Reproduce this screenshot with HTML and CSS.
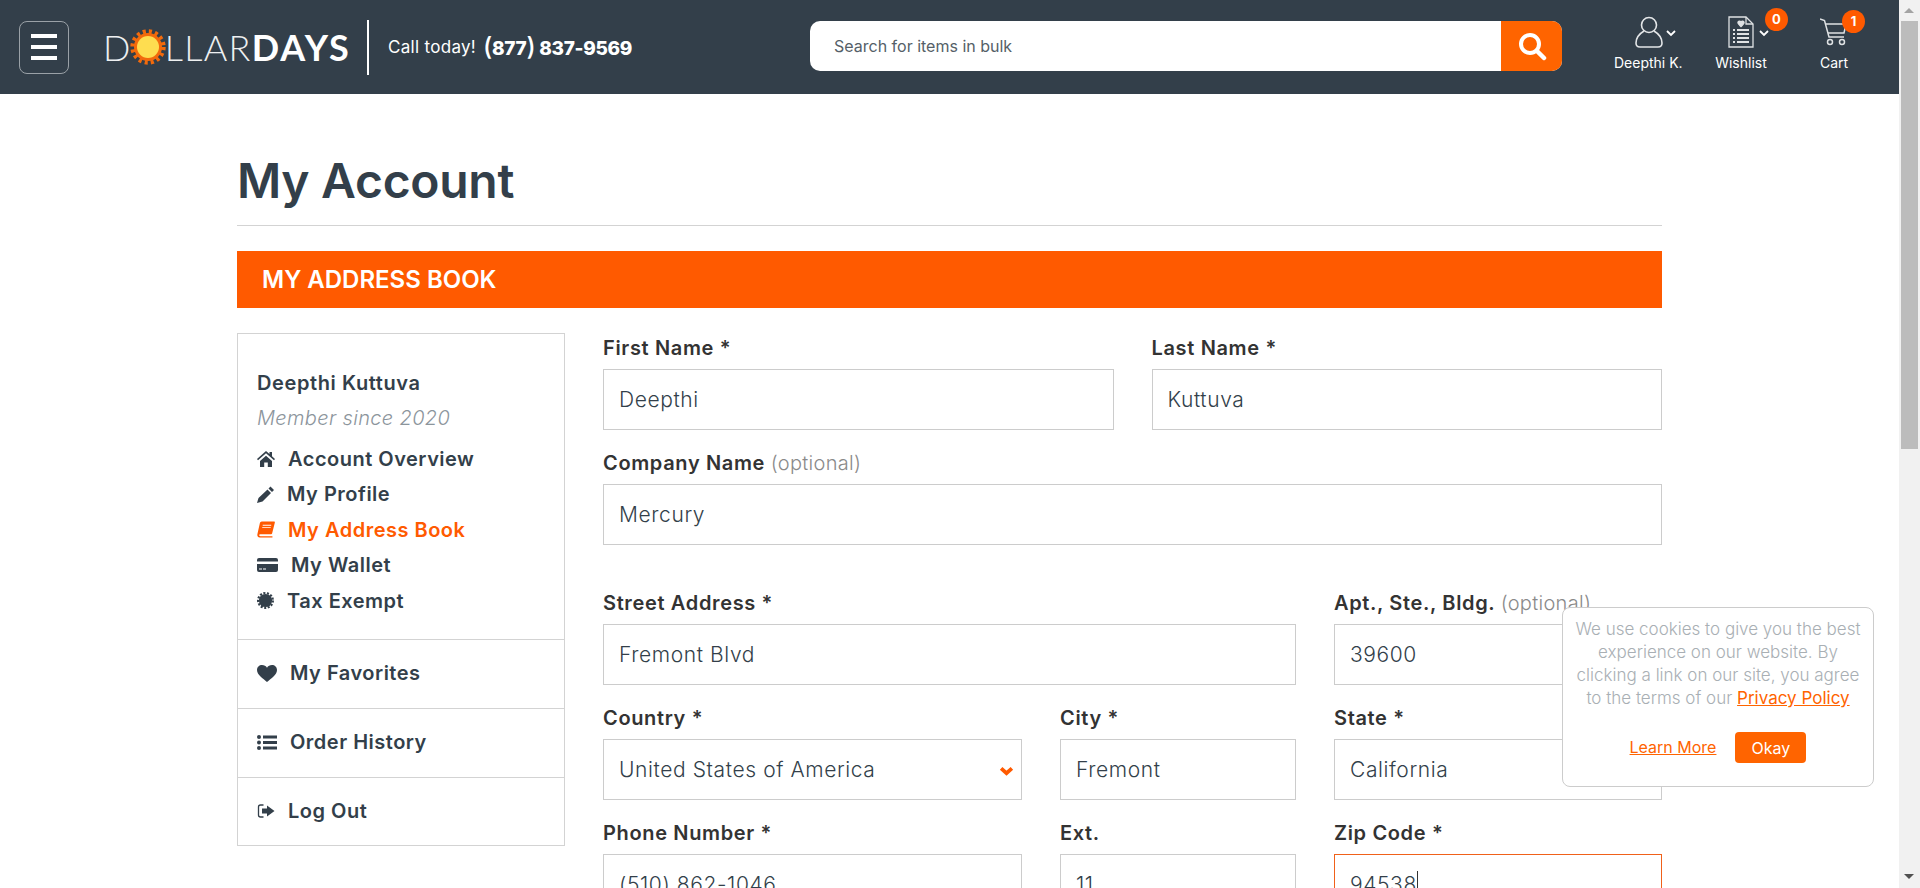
FILE: index.html
```html
<!DOCTYPE html>
<html lang="en">
<head>
    <meta charset="UTF-8">
    <meta name="viewport" content="width=device-width, initial-scale=1.0">
    <title>My Account</title>
    <link rel="stylesheet" href="styles.css">
</head>
<body>

<div class="app">
    <div class="page">
        <header class="topbar">
            <div class="menu-btn"><span></span><span></span><span></span></div>
            <div class="logo">
                <span>D</span>
                <svg class="sun" viewBox="0 0 36 36" width="36" height="36">
                    <circle cx="18" cy="18" r="15.2" fill="none" stroke="#f26a0c" stroke-width="5" stroke-dasharray="3 3"></circle>
                    <circle cx="18" cy="18" r="14" fill="#f26a0c"></circle>
                    <circle cx="18" cy="18" r="11" fill="#fedd50"></circle>
                </svg>
                <span>LLAR</span><strong>DAYS</strong>
            </div>
            <div class="call">
                <span class="call-text">Call today!</span>
                <span class="call-num"><span class="paren">(</span>877<span class="paren">)</span> 837-9569</span>
            </div>
            <div class="search">
                <div class="search-text">Search for items in bulk</div>
                <div class="search-btn">
                    <svg viewBox="0 0 30 30" width="30" height="30">
                        <circle cx="13" cy="13" r="9" fill="none" stroke="#fff" stroke-width="4"></circle>
                        <path d="M20 20l7 7" stroke="#fff" stroke-width="4.5" stroke-linecap="round"></path>
                    </svg>
                </div>
            </div>
            <div class="tool tool-user">
                <svg viewBox="0 0 28 32" width="28" height="32" fill="none" stroke="#e4e6e8" stroke-width="1.6">
                    <circle cx="14" cy="9" r="7.5"></circle>
                    <path d="M9 15C4 18 1 22 1 27c0 3 1.5 4 4 4h18c2.500 0 4-1 4-4 0-5-3-9-8-12"></path>
                </svg>
                <svg class="chev" viewBox="0 0 10 7" width="10" height="7"><path d="M1 1l4 4 4-4" fill="none" stroke="#fff" stroke-width="1.800"></path></svg>
                <div class="tool-label">Deepthi K.</div>
            </div>
            <div class="tool tool-wish">
                <svg viewBox="0 0 26 32" width="26" height="32" fill="none" stroke="#dfe2e4" stroke-width="1.3">
                    <path d="M1 1h17l7 7v23H1z"></path>
                    <path d="M18 1v7h7"></path>
                    <path d="M10 6c1-1.500 3-1 3 .5 0-1.500 2-2 3-.5 .6 1.500-1.500 3-3 4.500C11.500 9 9.400 7.500 10 6z" fill="#dfe2e4"></path>
                    <path d="M5 14h2M9 14h12M5 18h2M9 18h12M5 22h2M9 22h12M5 26h2M9 26h12" stroke-width="1.800"></path>
                </svg>
                <svg class="chev" viewBox="0 0 10 7" width="10" height="7"><path d="M1 1l4 4 4-4" fill="none" stroke="#fff" stroke-width="1.800"></path></svg>
                <span class="badge">0</span>
                <div class="tool-label">Wishlist</div>
            </div>
            <div class="tool tool-cart">
                <svg viewBox="0 0 28 28" width="28" height="28" fill="none" stroke="#dfe2e4" stroke-width="1.500">
                    <path d="M0 1l4.500 1.500L9 19h15"></path>
                    <path d="M5.500 6H26l-2 9H8"></path>
                    <circle cx="10" cy="24" r="2.500"></circle>
                    <circle cx="22" cy="24" r="2.500"></circle>
                </svg>
                <span class="badge">1</span>
                <div class="tool-label">Cart</div>
            </div>
        </header>

        <main class="content">
            <h1>My Account</h1>
            <div class="title-bar">MY ADDRESS BOOK</div>

            <div class="columns">
                <aside class="sidebar">
                    <div class="side-top">
                        <div class="side-name">Deepthi Kuttuva</div>
                        <div class="side-since">Member since 2020</div>
                        <a class="side-link">
                            <svg viewBox="0 0 18 16" width="18" height="16"><path d="M9 0L0 8l1 1.200 8-7 8 7L18 8l-3-2.700V1h-2.500v2z"></path><path d="M3 10l6-5.200 6 5.200v6h-4.200v-4.500H7.200V16H3z"></path></svg>
                            Account Overview
                        </a>
                        <a class="side-link">
                            <svg viewBox="0 0 17 17" width="17" height="17"><path d="M13.500.5L17 4l-2 2-3.500-3.500zM10.500 3.500L14 7l-8.500 8.500L0 17l1.500-5z"></path></svg>
                            My Profile
                        </a>
                        <a class="side-link active">
                            <svg viewBox="0 0 19 17" width="18" height="17"><path d="M5 0h13c.8 0 1 .6.8 1.400L16 12.500c-.2.800-.7 1-1.500 1H3.500c-1.800 0-1.500 2 0 2H16l.6.800-.6.700H3C1 17 0 15.500.4 13.500L3 2C3.300.8 4 0 5 0zM6 3.500v1h9v-1zM5.500 6v1h9V6z" fill-rule="evenodd"></path></svg>
                            My Address Book
                        </a>
                        <a class="side-link">
                            <svg viewBox="0 0 21 14" width="21" height="14"><path d="M2 0h17a2 2 0 0 1 2 2v1.500H0V2a2 2 0 0 1 2-2zM0 6h21v6a2 2 0 0 1-2 2H2a2 2 0 0 1-2-2zM2 10.500v1h3v-1zM6 10.500v1h3v-1z" fill-rule="evenodd"></path></svg>
                            My Wallet
                        </a>
                        <a class="side-link">
                            <svg viewBox="0 0 18 18" width="17" height="17"><circle cx="9" cy="9" r="7"></circle><circle cx="9" cy="9" r="7.800" fill="none" stroke="#333f4a" stroke-width="2.400" stroke-dasharray="2.200 1.600"></circle></svg>
                            Tax Exempt
                        </a>
                    </div>
                    <a class="side-row">
                        <svg viewBox="0 0 20 17" width="20" height="17"><path d="M10 17C6 13.500 0 10 0 5 0 2 2.300 0 5 0c2.200 0 4 1 5 2.700C11 1 12.800 0 15 0c2.700 0 5 2 5 5 0 5-6 8.500-10 12z"></path></svg>
                        My Favorites
                    </a>
                    <a class="side-row">
                        <svg viewBox="0 0 20 15" width="20" height="15"><circle cx="2" cy="2" r="2"></circle><circle cx="2" cy="7.500" r="2"></circle><circle cx="2" cy="13" r="2"></circle><path d="M6 .5h14v3H6zM6 6h14v3H6zM6 11.500h14v3H6z"></path></svg>
                        Order History
                    </a>
                    <a class="side-row">
                        <svg viewBox="0 0 17 14" width="18" height="14"><path d="M6 1H3a2 2 0 0 0-2 2v8a2 2 0 0 0 2 2h3" fill="none" stroke="#333f4a" stroke-width="1.300"></path><path d="M4.500 4.500h5V1.500L17 7l-7.500 5.500v-3h-5z"></path></svg>
                        Log Out
                    </a>
                </aside>

                <form class="address-form">
                    <div class="row">
                        <div class="field half"><label>First Name *</label><div class="input">Deepthi</div></div>
                        <div class="field half"><label>Last Name *</label><div class="input">Kuttuva</div></div>
                    </div>
                    <div class="row row-gap">
                        <div class="field half"><label>Company Name <em>(optional)</em></label><div class="input">Mercury</div></div>
                    </div>
                    <div class="row">
                        <div class="field street"><label>Street Address *</label><div class="input">Fremont Blvd</div></div>
                        <div class="field half"><label>Apt., Ste., Bldg. <em>(optional)</em></label><div class="input">39600</div></div>
                    </div>
                    <div class="row">
                        <div class="field country">
                            <label>Country *</label>
                            <div class="input select">
                                United States of America
                                <svg viewBox="0 0 14 9" width="15" height="10"><path d="M2 2l5 4.500L12 2" fill="none" stroke="#ff5a00" stroke-width="3.500"></path></svg>
                            </div>
                        </div>
                        <div class="field city"><label>City *</label><div class="input">Fremont</div></div>
                        <div class="field half"><label>State *</label><div class="input">California</div></div>
                    </div>
                    <div class="row">
                        <div class="field country"><label>Phone Number *</label><div class="input">(510) 862-1046</div></div>
                        <div class="field city"><label>Ext.</label><div class="input">11</div></div>
                        <div class="field half"><label>Zip Code *</label><div class="input focused">94538<span class="caret"></span></div></div>
                    </div>
                </form>
            </div>
        </main>

        <div class="cookie">
            <p>We use cookies to give you the best experience on our website. By clicking a link on our site, you agree to the terms of our <a>Privacy Policy</a></p>
            <div class="cookie-actions">
                <a>Learn More</a>
                <button type="button">Okay</button>
            </div>
        </div>
    </div>

    <div class="scrollbar">
        <div class="arrow-up"></div>
        <div class="thumb"></div>
        <div class="arrow-down"></div>
    </div>
</div>

</body>
</html>
```

FILE: styles.css
```css
* {
    box-sizing: border-box;
}
body {
    margin: 0;
    font-family: Inter, "Open Sans", sans-serif;
    color: #333f4a;
    background: #fff;
}
.app {
    display: flex;
    height: 888px;
    overflow: hidden;
}
.page {
    flex: 1;
    min-width: 0;
    position: relative;
}

/* header */
.topbar {
    display: flex;
    align-items: center;
    height: 94px;
    background: #333f4a;
    color: #fff;
}
.menu-btn {
    display: flex;
    flex-direction: column;
    justify-content: center;
    gap: 6.500px;
    width: 50px;
    height: 53px;
    margin-left: 19px;
    padding: 0 11px;
    border: 1px solid #9aa1a7;
    border-radius: 8px;
}
.menu-btn span {
    height: 4.500px;
    background: #fff;
}
.logo {
    display: flex;
    align-items: center;
    width: 266px;
    height: 55px;
    margin-left: 34px;
    border-right: 2px solid #fff;
    font-family: Lato, sans-serif;
    font-size: 36px;
    font-weight: 300;
    letter-spacing: 1.300px;
    color: #eef0f1;
}
.logo strong {
    font-weight: 700;
    color: #fff;
    letter-spacing: 2px;
}
.sun {
    margin: 0 -1px 0 -2px;
}
.call {
    display: flex;
    align-items: center;
    width: 422px;
    margin-left: 19px;
}
.call-text {
    font-size: 17px;
    letter-spacing: .3px;
    margin-right: 7px;
}
.call-num {
    font-size: 19px;
    font-weight: 800;
    letter-spacing: -.3px;
}
.paren {
    font-size: 25px;
    font-weight: 500;
    line-height: 1;
}
.search {
    display: flex;
    width: 752px;
    height: 50px;
    margin-bottom: 2px;
    border-radius: 10px;
    overflow: hidden;
    background: #fff;
}
.search-text {
    flex: 1;
    padding-left: 24px;
    font-size: 16px;
    line-height: 50px;
    color: #555f68;
}
.search-btn {
    display: flex;
    align-items: center;
    justify-content: center;
    width: 61px;
    background: #ff6400;
}
.tool {
    position: relative;
    height: 94px;
    flex: none;
}
.tool svg {
    position: absolute;
}
.tool .chev {
    top: 30px;
}
.tool-label {
    position: absolute;
    top: 53px;
    left: 0;
    right: 0;
    font-size: 14px;
    line-height: 20px;
    text-align: center;
    white-space: nowrap;
}
.tool-user {
    width: 68px;
    margin-left: 52px;
}
.tool-user svg:first-child {
    left: 21px;
    top: 16px;
}
.tool-user .chev {
    left: 52px;
}
.tool-wish {
    width: 52px;
    margin-left: 33px;
}
.tool-wish svg:first-child {
    left: 13px;
    top: 16px;
}
.tool-wish .chev {
    left: 44px;
}
.tool-cart {
    width: 30px;
    margin-left: 52px;
}
.tool-cart svg:first-child {
    left: 1px;
    top: 18px;
}
.badge {
    position: absolute;
    width: 23px;
    height: 23px;
    border-radius: 50%;
    background: #ff5a00;
    font-size: 13px;
    font-weight: 700;
    line-height: 23px;
    text-align: center;
}
.tool-wish .badge {
    left: 50px;
    top: 8px;
}
.tool-cart .badge {
    left: 23px;
    top: 10px;
}

/* main */
.content {
    width: 1425px;
    margin: 0 auto;
}
h1 {
    height: 132px;
    margin: 0;
    padding-top: 57px;
    border-bottom: 1px solid #d3d3d3;
    font-size: 48px;
    font-weight: 600;
    letter-spacing: -.3px;
    line-height: 60px;
}
.title-bar {
    height: 57px;
    margin-top: 25px;
    padding-left: 25px;
    background: #ff5a00;
    color: #fff;
    font-size: 24px;
    font-weight: 600;
    line-height: 57px;
}
.columns {
    display: flex;
    gap: 38px;
    margin-top: 25px;
}
.sidebar {
    flex: none;
    width: 328px;
    height: 513px;
    border: 1px solid #d3d3d3;
}
.side-top {
    height: 305px;
    padding: 31px 19px 0;
}
.side-name {
    font-size: 20px;
    font-weight: 600;
    letter-spacing: .6px;
    line-height: 36px;
}
.side-since {
    margin-top: 2px;
    margin-bottom: 8px;
    font-size: 20px;
    font-style: italic;
    font-weight: 300;
    letter-spacing: .35px;
    line-height: 30px;
    color: #8c959c;
}
.side-link,
.side-row {
    display: flex;
    align-items: center;
    gap: 13px;
    font-size: 20px;
    font-weight: 600;
    letter-spacing: .5px;
    color: #333f4a;
}
.side-link {
    height: 35.500px;
}
.side-link svg,
.side-row svg {
    fill: #333f4a;
}
.side-link.active {
    color: #ff5a00;
}
.side-link.active svg {
    fill: #ff5a00;
}
.side-row {
    height: 69px;
    padding-left: 19px;
    padding-bottom: 2px;
    border-top: 1px solid #d3d3d3;
}

/* form */
.address-form {
    flex: 1;
    min-width: 0;
}
.row {
    display: flex;
    gap: 38px;
}
.row-gap {
    margin-bottom: 25px;
}
.field {
    margin-bottom: 18px;
}
.half {
    flex: 1;
    min-width: 0;
}
.street {
    flex: none;
    width: 693px;
}
.country {
    flex: none;
    width: 419px;
}
.city {
    flex: none;
    width: 236px;
}
label {
    display: block;
    margin-bottom: 7px;
    padding-top: 1px;
    font-size: 20px;
    font-weight: 600;
    letter-spacing: .65px;
    line-height: 28px;
    color: #333;
    white-space: nowrap;
}
label em {
    font-style: normal;
    font-weight: 300;
    letter-spacing: .3px;
    color: #8a8a8a;
}
.input {
    position: relative;
    height: 61px;
    padding-left: 15px;
    border: 1px solid #ccc;
    font-size: 21px;
    font-weight: 300;
    letter-spacing: .6px;
    line-height: 59px;
    color: #333f4a;
}
.select svg {
    position: absolute;
    right: 7px;
    top: 26px;
}
.focused {
    border-color: #f0611a;
}
.caret {
    display: inline-block;
    width: 1px;
    height: 24px;
    background: #333;
    vertical-align: -3px;
}

/* cookie box */
.cookie {
    position: absolute;
    right: 25px;
    bottom: 101px;
    width: 312px;
    height: 180px;
    padding: 10px 10px 0;
    background: #fff;
    border: 1px solid #ccc;
    border-radius: 8px;
    text-align: center;
    font-size: 17px;
    font-weight: 300;
    line-height: 23px;
    color: #a9afb4;
}
.cookie p {
    margin: 0;
}
.cookie a {
    color: #ff6400;
    font-weight: 400;
    text-decoration: underline;
}
.cookie-actions {
    display: flex;
    align-items: center;
    justify-content: center;
    gap: 19px;
    margin-top: 22px;
    font-size: 16px;
}
.cookie button {
    width: 71px;
    height: 31px;
    border: 0;
    border-radius: 4px;
    background: #ff6400;
    color: #fff;
    font-family: inherit;
    font-size: 16px;
}

/* scrollbar */
.scrollbar {
    flex: none;
    position: relative;
    width: 21px;
    background: #f1f1f1;
    padding: 21px 2px 0 2px;
}
.thumb {
    height: 428px;
    background: #bcbcbc;
}
.arrow-up,
.arrow-down {
    position: absolute;
    left: 5px;
    border-left: 5px solid transparent;
    border-right: 5px solid transparent;
}
.arrow-up {
    top: 8px;
    border-bottom: 5px solid #a3a3a3;
}
.arrow-down {
    bottom: 9px;
    border-top: 5px solid #505050;
}
```
